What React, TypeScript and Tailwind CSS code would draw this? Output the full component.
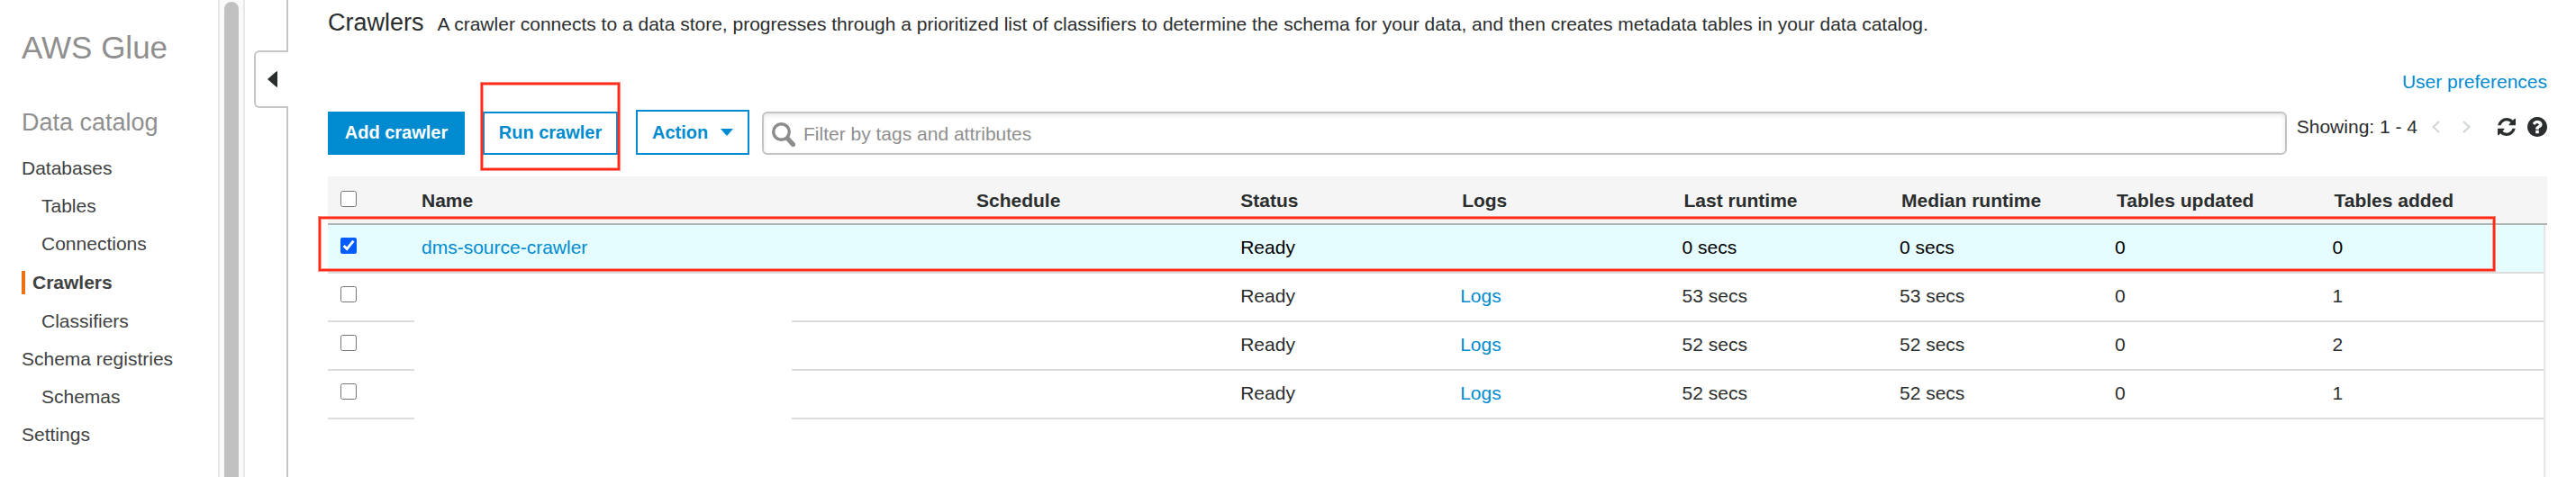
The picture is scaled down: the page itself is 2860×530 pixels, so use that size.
import React from "react";

type NavItem = { label: string; nested?: boolean; active?: boolean };

const navItems: NavItem[] = [
  { label: "Databases" },
  { label: "Tables", nested: true },
  { label: "Connections", nested: true },
  { label: "Crawlers", active: true },
  { label: "Classifiers", nested: true },
  { label: "Schema registries" },
  { label: "Schemas", nested: true },
  { label: "Settings" },
];

type Crawler = {
  name?: string;
  status: string;
  logs: boolean;
  last: string;
  median: string;
  updated: number;
  added: number;
};

const crawlers: Crawler[] = [
  { name: "dms-source-crawler", status: "Ready", logs: false, last: "0 secs", median: "0 secs", updated: 0, added: 0 },
  { status: "Ready", logs: true, last: "53 secs", median: "53 secs", updated: 0, added: 1 },
  { status: "Ready", logs: true, last: "52 secs", median: "52 secs", updated: 0, added: 2 },
  { status: "Ready", logs: true, last: "52 secs", median: "52 secs", updated: 0, added: 1 },
];

const highlight =
  "pointer-events-none absolute border-2 border-[#ff2a1a] shadow-[0_0_0_1px_rgba(255,60,40,0.6),inset_0_0_0_1px_rgba(255,60,40,0.5)]";

function Sidebar() {
  return (
    <aside className="flex w-[242px] shrink-0 flex-col pl-6 pt-8">
      <h1 className="text-[35px] leading-[42px] text-[#8f8f8f]">AWS Glue</h1>
      <h2 className="mt-[46px] text-[27px] leading-[32px] text-[#8f8f8f]">Data catalog</h2>
      <nav aria-label="Data catalog" className="mt-[14px] text-[#3f4242]">
        <ul>
          {navItems.map((item) => (
            <li
              key={item.label}
              className={
                item.active
                  ? "flex h-11 items-center"
                  : item.nested
                    ? "flex h-[42px] items-center pl-[22px]"
                    : "flex h-[42px] items-center"
              }
            >
              <a
                href="#"
                className={
                  item.active
                    ? "border-l-4 border-[#ec7211] pl-2 font-bold leading-[26px]"
                    : "leading-[26px]"
                }
              >
                {item.label}
              </a>
            </li>
          ))}
        </ul>
      </nav>
    </aside>
  );
}

function ScrollTrack() {
  return (
    <div className="flex w-[30px] shrink-0 justify-center border-x-2 border-[#e8e8e8] bg-[#fafafa] pt-0.5">
      <div className="w-4 rounded-t-full bg-[#c1c1c1]" />
    </div>
  );
}

function CollapseRail() {
  return (
    <div className="flex w-12 shrink-0 flex-col items-end">
      <div className="h-14 w-0.5 bg-[#c5c5c5]" />
      <button
        type="button"
        aria-label="Collapse navigation"
        className="flex h-16 w-[38px] items-center rounded-l-md border-2 border-r-0 border-[#c5c5c5] pl-[13px]"
      >
        <svg width="11" height="18" viewBox="0 0 11 18" fill="#2b2e2e">
          <path d="M11 0v18L9 17 0 9 9 1z" />
        </svg>
      </button>
      <div className="w-0.5 flex-1 bg-[#c5c5c5]" />
    </div>
  );
}

function Toolbar() {
  return (
    <div className="mt-[19px] flex items-end">
      <button
        type="button"
        className="h-12 w-[152px] whitespace-nowrap bg-[#008bd0] pb-0.5 text-[20px] font-bold text-white"
      >
        Add crawler
      </button>
      <div className="relative ml-5">
        <button
          type="button"
          className="block h-12 w-[150px] whitespace-nowrap border-2 border-[#008bd0] bg-white pb-0.5 text-[20px] font-bold text-[#008bd0]"
        >
          Run crawler
        </button>
        <div className={`${highlight} -bottom-[17px] -left-0.5 -right-0.5 -top-8`} />
      </div>
      <button
        type="button"
        aria-haspopup="menu"
        className="ml-5 flex h-[50px] w-[126px] items-center justify-between border-2 border-[#008bd0] bg-white px-4 text-[20px] font-bold text-[#008bd0]"
      >
        Action
        <svg width="14" height="8" viewBox="0 0 14 8" fill="#008bd0">
          <path d="M0 0h14L7.800 7.300a1.200 1.200 0 0 1-1.600 0z" />
        </svg>
      </button>
      <div className="ml-[14px] flex h-12 flex-1 items-center rounded-md border-2 border-[#c3c3c3] bg-white pl-[9px] shadow-[inset_0_2px_5px_rgba(0,0,0,0.1)]">
        <svg width="26" height="27" viewBox="0 0 26 27" fill="none" stroke="#8c8c8c" className="mt-[3px]">
          <circle cx="10.500" cy="10.500" r="8.800" strokeWidth="3.400" />
          <path d="M17.500 18l6 6.500" strokeWidth="5.200" strokeLinecap="round" />
        </svg>
        <input
          type="text"
          aria-label="Filter by tags and attributes"
          placeholder="Filter by tags and attributes"
          className="ml-[9px] mt-0.5 h-6 min-w-0 flex-1 bg-transparent outline-none placeholder:text-[#8f8f8f]"
        />
      </div>
      <div className="ml-[11px] flex h-[43px] items-start self-end">
        <span className="whitespace-nowrap">Showing: 1 - 4</span>
        <button type="button" aria-label="Previous page" className="ml-4 flex h-6 items-center">
          <svg width="9" height="14" viewBox="0 0 9 14" fill="none" stroke="#d0d4d4" strokeWidth="2">
            <path d="M8 1L1.500 7 8 13" />
          </svg>
        </button>
        <button type="button" aria-label="Next page" className="ml-[25px] flex h-6 items-center">
          <svg width="9" height="14" viewBox="0 0 9 14" fill="none" stroke="#d0d4d4" strokeWidth="2">
            <path d="M1 1l6.500 6L1 13" />
          </svg>
        </button>
        <button type="button" aria-label="Refresh" className="ml-[30px] flex h-6 items-center">
          <svg width="20" height="20" viewBox="0 0 1536 1536" fill="#2b2e2e">
            <path d="M1511 928q0 5-1 7-64 268-268 434.500T764 1536q-146 0-282.500-55T238 1324l-129 129q-19 19-45 19t-45-19-19-45V960q0-26 19-45t45-19h448q26 0 45 19t19 45-19 45l-137 137q71 66 161 102t187 36q134 0 250-65t186-179q11-17 53-117 8-23 30-23h192q13 0 22.500 9.500t9.500 22.500zm25-800v448q0 26-19 45t-45 19h-448q-26 0-45-19t-19-45 19-45l138-138Q969 256 768 256q-134 0-250 65T332 500q-11 17-53 117-8 23-30 23H50q-13 0-22.500-9.500T18 608v-7q65-268 270-434.500T768 0q146 0 284 55.500T1297 212l130-129q19-19 45-19t45 19 19 45z" />
          </svg>
        </button>
        <button type="button" aria-label="Help" className="ml-[13px] flex h-6 items-center">
          <svg width="22" height="22" viewBox="0 0 1536 1536" fill="#2b2e2e">
            <path d="M896 1248v-192q0-14-9-23t-23-9H672q-14 0-23 9t-9 23v192q0 14 9 23t23 9h192q14 0 23-9t9-23zm256-672q0-88-55.500-163T958 297t-170-41q-243 0-371 213-15 24 8 42l132 100q7 6 19 6 16 0 25-12 53-68 86-92 34-24 86-24 48 0 85.500 26t37.500 59q0 38-20 61t-68 45q-63 28-115.500 86.500T640 892v36q0 14 9 23t23 9h192q14 0 23-9t9-23q0-19 21.500-49.500T972 829q32-18 49-28.500t46-35 44.500-48 28-60.500 12.500-81zm384 192q0 209-103 385.500T1153.500 1433 768 1536t-385.500-103T103 1153.500 0 768t103-385.500T382.500 103 768 0t385.500 103T1433 382.500 1536 768z" />
          </svg>
        </button>
      </div>
    </div>
  );
}

const thClass = "border-b-2 border-[#b0b5b5] pb-[13px] pl-[10px] pt-[15px] text-left font-bold";
const thFlushClass = "border-b-2 border-[#b0b5b5] pb-[13px] pl-2 pt-[15px] text-left font-bold";
const cell = "border-b-2 border-[#dcdcdc] pb-[15px] pl-2 pt-[13px] whitespace-nowrap";

function CrawlerTable() {
  return (
    <div className="relative mt-6 flex flex-1 flex-col">
      <table className="w-full table-fixed border-separate border-spacing-0">
        <colgroup>
          <col className="w-24" />
          <col className="w-[25%]" />
          <col className="w-[11.9%]" />
          <col className="w-[9.9%]" />
          <col className="w-[10%]" />
          <col className="w-[9.8%]" />
          <col className="w-[9.7%]" />
          <col className="w-[9.8%]" />
          <col />
          <col className="w-1" />
        </colgroup>
        <thead className="bg-[#f5f5f5]">
          <tr>
            <th scope="col" className="border-b-2 border-[#b0b5b5] pl-[14px] pt-4 align-top">
              <input type="checkbox" aria-label="Select all crawlers" className="block size-[18px]" />
            </th>
            <th scope="col" className={thFlushClass}>Name</th>
            <th scope="col" className={thFlushClass}>Schedule</th>
            <th scope="col" className={thFlushClass}>Status</th>
            <th scope="col" className={thClass}>Logs</th>
            <th scope="col" className={thClass}>Last runtime</th>
            <th scope="col" className={thClass}>Median runtime</th>
            <th scope="col" className={thClass}>Tables updated</th>
            <th scope="col" className={thClass}>Tables added</th>
            <td className="border-b-2 border-[#b0b5b5]" />
          </tr>
        </thead>
        <tbody>
          {crawlers.map((c, i) => (
            <tr key={i} className={c.name ? "bg-[#e5fdff] text-black" : "bg-white"}>
              <td className="border-b-2 border-[#dcdcdc] pl-[14px] pt-[14px] align-top">
                <input
                  type="checkbox"
                  aria-label={`Select crawler ${i + 1}`}
                  defaultChecked={Boolean(c.name)}
                  className="block size-[18px] accent-[#005cff]"
                />
              </td>
              <td className={`relative ${cell}`}>
                {c.name ? (
                  <a href="#" className="text-[#008bd0]">
                    {c.name}
                  </a>
                ) : (
                  <div className="absolute -bottom-0.5 left-0 top-0 w-[68%] bg-white" />
                )}
              </td>
              <td className={cell} />
              <td className={cell}>{c.status}</td>
              <td className={cell}>
                {c.logs && (
                  <a href="#" className="text-[#008bd0]">
                    Logs
                  </a>
                )}
              </td>
              <td className={cell}>{c.last}</td>
              <td className={cell}>{c.median}</td>
              <td className={cell}>{c.updated}</td>
              <td className={cell}>{c.added}</td>
              <td className="border-l-2 border-[#e5e5e5] bg-[#fafafa]" />
            </tr>
          ))}
        </tbody>
      </table>
      <div className="w-1 flex-1 self-end border-l-2 border-[#e5e5e5] bg-[#fafafa]" />
      <div className={`${highlight} -left-[10px] right-[58px] top-[45px] h-[60px]`} />
    </div>
  );
}

export default function App() {
  return (
    <div className="flex min-h-screen bg-white font-['Liberation_Sans',Arial,sans-serif] text-[21px] leading-6 text-[#2b2e2e]">
      <Sidebar />
      <ScrollTrack />
      <CollapseRail />
      <main className="flex min-w-0 flex-1 flex-col pl-11 pr-8 pt-[9px]">
        <header className="flex items-baseline gap-[15px]">
          <h2 className="text-[27px] leading-[32px]">Crawlers</h2>
          <p>
            A crawler connects to a data store, progresses through a prioritized list of classifiers to determine the
            schema for your data, and then creates metadata tables in your data catalog.
          </p>
        </header>
        <a href="#" className="mt-[38px] self-end text-[#008bd0]">
          User preferences
        </a>
        <Toolbar />
        <CrawlerTable />
      </main>
    </div>
  );
}
